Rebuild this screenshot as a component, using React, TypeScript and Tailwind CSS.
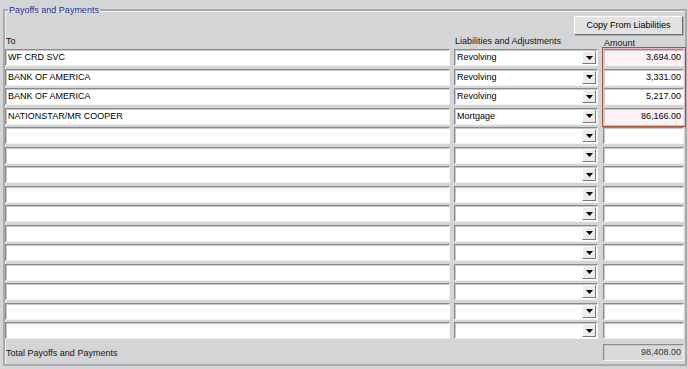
import React from "react";

const rows = [
  { to: "WF CRD SVC", kind: "Revolving", amount: "3,694.00", pink: true },
  { to: "BANK OF AMERICA", kind: "Revolving", amount: "3,331.00", pink: false },
  { to: "BANK OF AMERICA", kind: "Revolving", amount: "5,217.00", pink: false },
  { to: "NATIONSTAR/MR COOPER", kind: "Mortgage", amount: "86,166.00", pink: true },
  ...Array.from({ length: 11 }, () => ({ to: "", kind: "", amount: "", pink: false })),
];

const sunken =
  "border-t border-l border-t-[#8a8a8a] border-l-[#8a8a8a] border-b border-r border-b-[#f4f4f4] border-r-[#f4f4f4] shadow-[inset_1px_1px_0_#c8c8c8]";

const cols = "grid grid-cols-[445px_144px_82px] gap-x-[4px]";

const ComboBox = ({ value }: { value: string }) => (
  <div className={`relative h-[17px] bg-white ${sunken} flex items-center`}>
    <span className="pl-[2px] leading-[11px] text-black">{value}</span>
    <div className="absolute right-[1px] top-[1px] bottom-[1px] w-[14px] bg-[#ececec] border-t border-l border-t-white border-l-white border-b border-r border-b-[#7a7a7a] border-r-[#7a7a7a] flex items-center justify-center">
      <svg width="7" height="4" viewBox="0 0 7 4">
        <path d="M0 0h7L3.5 4z" fill="#000" />
      </svg>
    </div>
  </div>
);

export default function App() {
  return (
    <div
      className="w-[688px] h-[369px] bg-[#d4d5d7] pt-[4px] pl-[3px] text-[9px] text-[#141414] overflow-hidden"
      style={{ fontFamily: '"Liberation Sans", Arial, sans-serif' }}
    >
      <fieldset className="w-[684px] h-[362px] border-2 border-solid border-[#a9aaac] shadow-[inset_1px_1px_0_#f4f4f4] flex flex-col">
        <legend className="ml-[3px] px-[1px] leading-[12px] text-[#21308f]">Payoffs and Payments</legend>

        <div className="flex justify-end pr-[2px]">
          <button className="w-[109px] h-[19px] bg-[#e2e2e2] border border-t-white border-l-white border-b-[#6e6e6e] border-r-[#6e6e6e] shadow-[1px_1px_0_#b0b0b0] text-[9px] text-black leading-[11px]">
            Copy From Liabilities
          </button>
        </div>

        <div className={cols}>
          <div className="h-[14px] pt-[1px] pl-[1px] leading-[11px]">To</div>
          <div className="h-[14px] pt-[1px] pl-[1px] leading-[11px]">Liabilities and Adjustments</div>
          <div className="h-[14px] pt-[3px] pl-[1px] ml-[1px] leading-[11px]">Amount</div>
        </div>

        <div className={`${cols} gap-y-[2.5px]`}>
          {rows.map((r, i) => (
            <React.Fragment key={i}>
              <div className={`h-[17px] bg-white ${sunken} flex items-center`}>
                <span className="pl-[2px] leading-[11px] text-black">{r.to}</span>
              </div>
              <ComboBox value={r.kind} />
              <div className="relative ml-[1px]">
                <div
                  className={`h-[17px] ${r.pink ? "bg-[#fff2f7]" : "bg-white"} ${sunken} flex items-center justify-end`}
                >
                  <span className="pr-[2px] leading-[11px] text-black">{r.amount}</span>
                </div>
                {i === 0 && (
                  <div className="absolute -left-[1px] -right-[2px] -top-[2px] h-[80px] border border-[#a9523a] shadow-[inset_0_0_0_1px_#f5b5c8] pointer-events-none z-10" />
                )}
              </div>
            </React.Fragment>
          ))}
        </div>

        <div className={`${cols} mt-[5px]`}>
          <div className="pl-[1px] pt-[4px] leading-[11px]">Total Payoffs and Payments</div>
          <div />
          <div className={`ml-[1px] h-[17px] bg-[#d9dadc] ${sunken} flex items-center justify-end`}>
            <span className="pr-[2px] leading-[11px] text-[#333]">98,408.00</span>
          </div>
        </div>
      </fieldset>
    </div>
  );
}
